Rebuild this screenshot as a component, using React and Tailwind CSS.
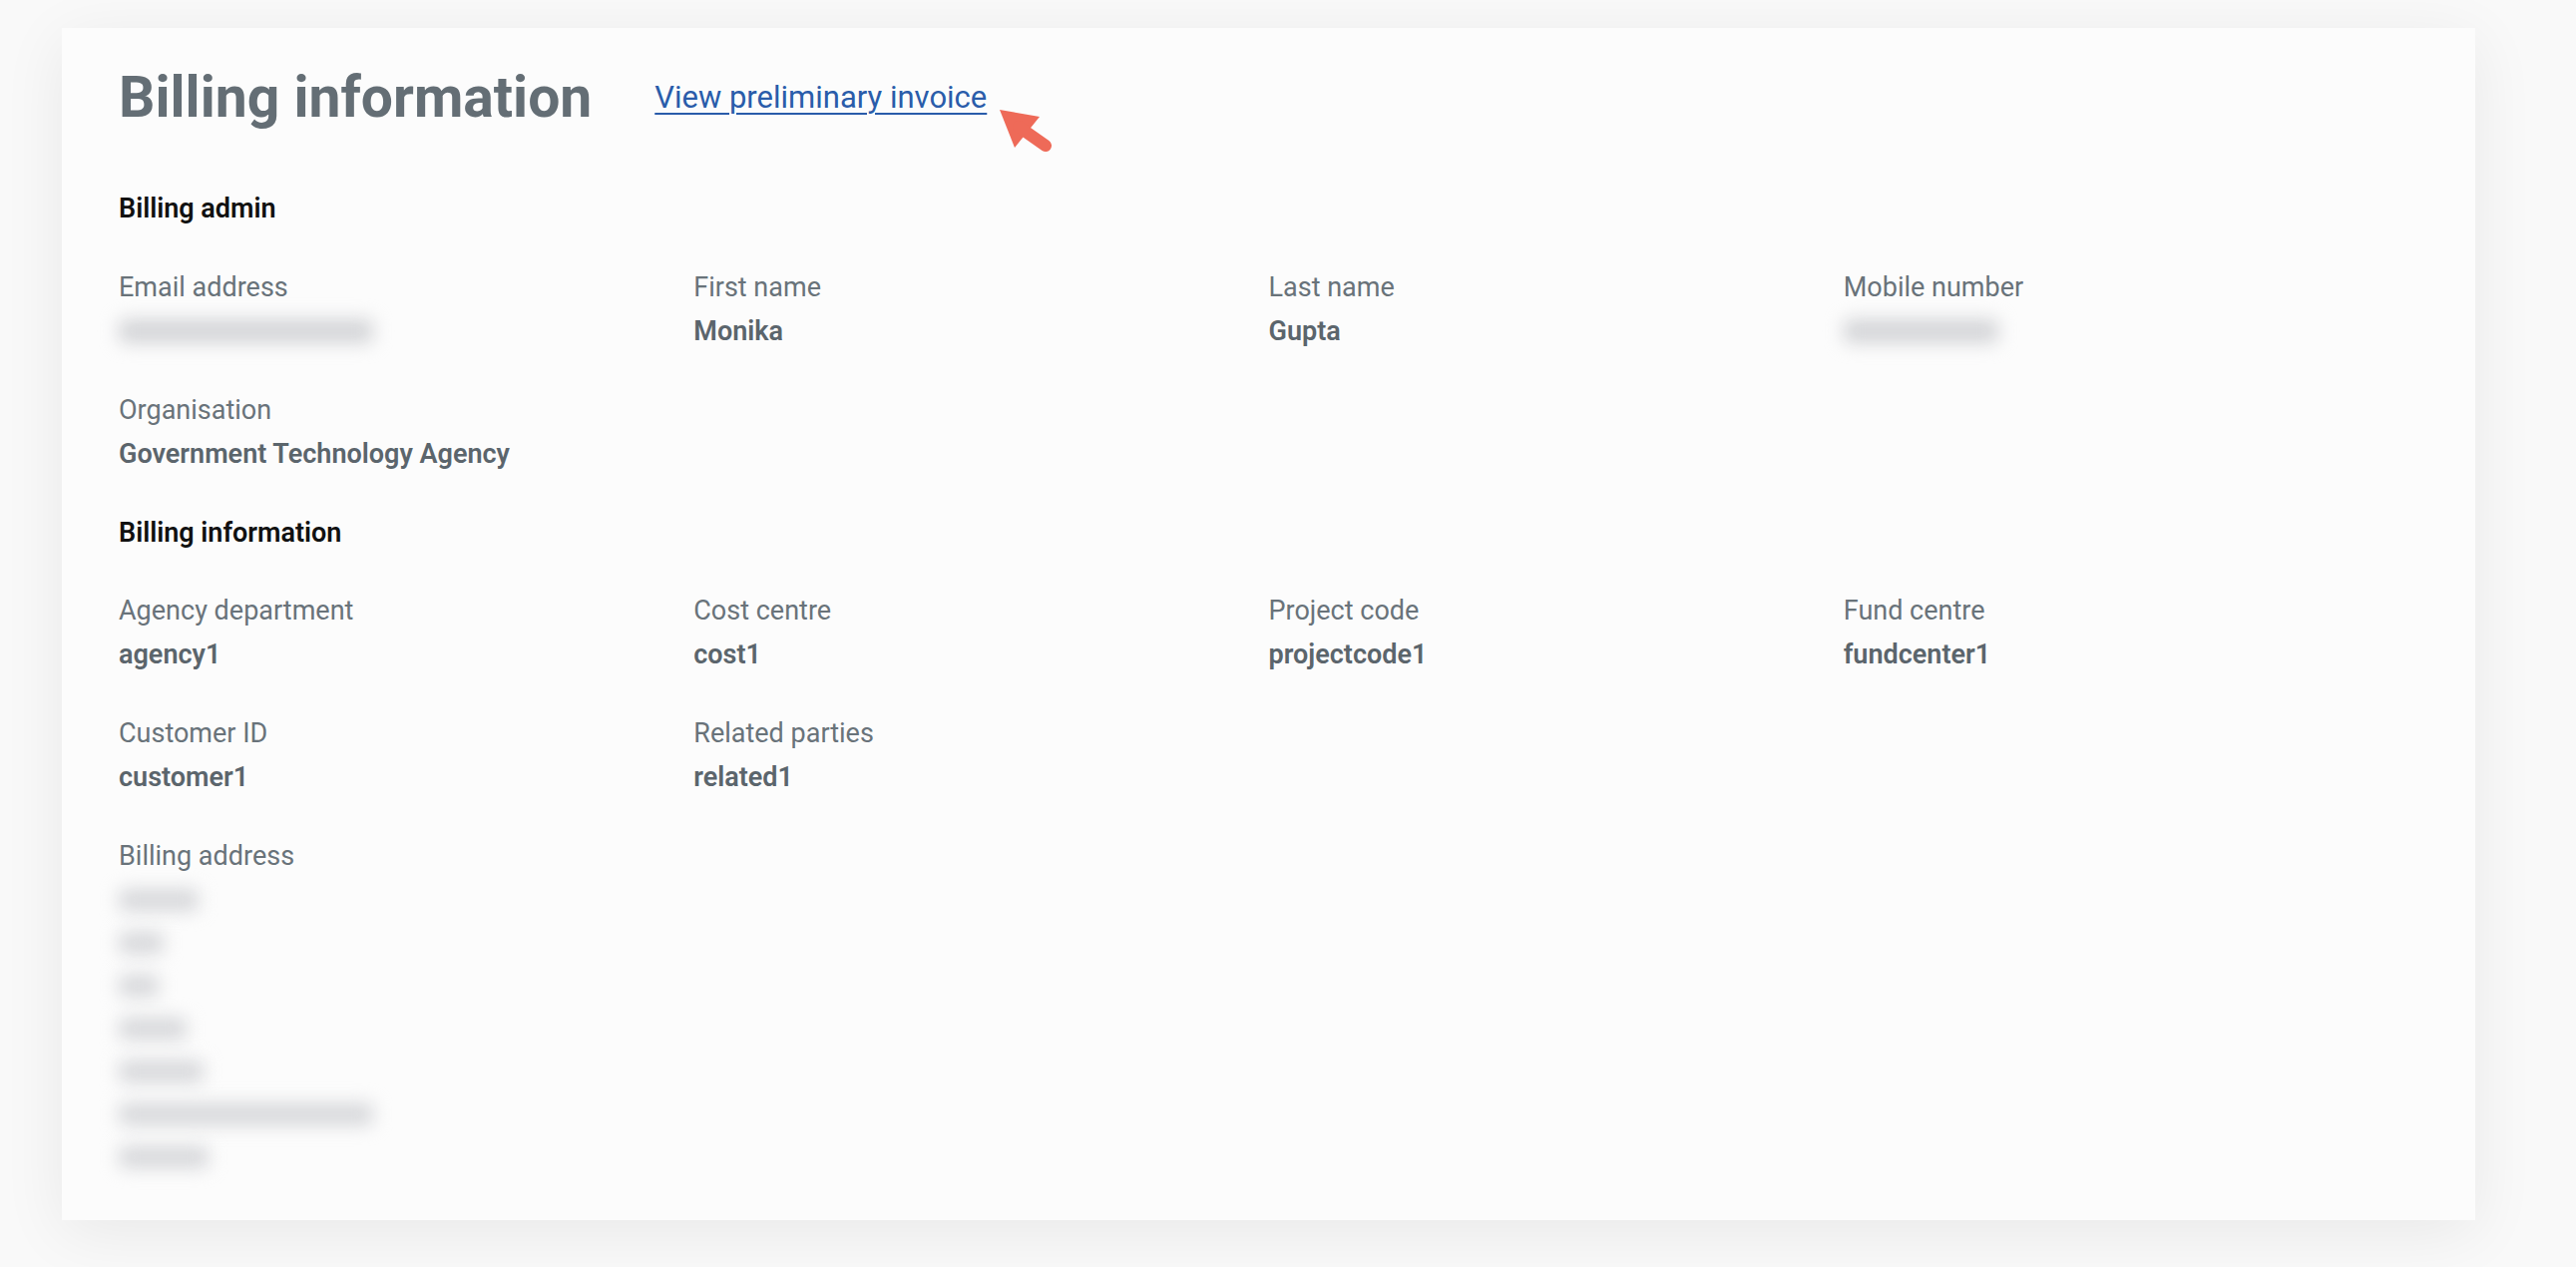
import React from 'react';

const font = { fontFamily: 'Roboto, "Noto Sans", Arial, sans-serif' };

// blurred placeholder for redacted values
const Redacted = ({ width, className = '' }) => (
  <div className={'h-[36px] flex items-center ' + className}>
    <div className="h-[24px] rounded-[6px] bg-[#d3d4d7] blur-[9px]" style={{ width }} />
  </div>
);

const Field = ({ label, value, redacted }) => (
  <div className="flex flex-col">
    <div className="text-[27px] leading-[36px] text-[#69737a]">{label}</div>
    <div className="mt-[8px]">
      {redacted ? (
        <Redacted width={redacted} />
      ) : (
        <div className="text-[27px] leading-[36px] font-semibold text-[#5b656c]">{value}</div>
      )}
    </div>
  </div>
);

const SectionTitle = ({ children, className = '' }) => (
  <div className={'text-[27px] leading-[36px] font-semibold text-[#111111] ' + className}>{children}</div>
);

const Arrow = () => (
  <svg width="60" height="52" viewBox="0 0 60 52" className="absolute left-[calc(100%+8px)] top-[25px]">
    <polygon points="5,5 45,12 20,43" fill="#ee6a58" />
    <line x1="24" y1="22" x2="51" y2="41" stroke="#ee6a58" strokeWidth="12" strokeLinecap="round" />
  </svg>
);

const addressLines = [80, 45, 40, 68, 85, 255, 90];

export default function App() {
  return (
    <div className="min-h-screen bg-[#f9f9f9] pt-[28px] pl-[62px]" style={font}>
      <div className="w-[2419px] h-[1195px] bg-[#fcfcfc] shadow-[0_12px_60px_rgba(0,0,0,0.07)] pt-[36px] pl-[57px] pr-[57px]">
        <div className="flex items-center gap-[63px] h-[68px]">
          <h1 className="text-[57px] leading-[68px] font-bold text-[#646e75]">Billing information</h1>
          <span className="relative">
            <a href="#" className="text-[31px] leading-[36px] text-[#2a5caa] underline underline-offset-[5px] decoration-2">
              View preliminary invoice
            </a>
            <Arrow />
          </span>
        </div>

        <SectionTitle className="mt-[59px]">Billing admin</SectionTitle>
        <div className="grid grid-cols-4 gap-y-[43px] mt-[43px]">
          <Field label="Email address" redacted={255} />
          <Field label="First name" value="Monika" />
          <Field label="Last name" value="Gupta" />
          <Field label="Mobile number" redacted={155} />
          <Field label="Organisation" value="Government Technology Agency" />
        </div>

        <SectionTitle className="mt-[43px]">Billing information</SectionTitle>
        <div className="grid grid-cols-4 gap-y-[43px] mt-[42px]">
          <Field label="Agency department" value="agency1" />
          <Field label="Cost centre" value="cost1" />
          <Field label="Project code" value="projectcode1" />
          <Field label="Fund centre" value="fundcenter1" />
          <Field label="Customer ID" value="customer1" />
          <Field label="Related parties" value="related1" />
        </div>

        <div className="mt-[43px]">
          <div className="text-[27px] leading-[36px] text-[#69737a]">Billing address</div>
          <div className="flex flex-col mt-[4px]">
            {addressLines.map((w, i) => (
              <div key={i} className="h-[43px] flex items-center">
                <div className="h-[22px] rounded-[6px] bg-[#d6d7da] blur-[9px]" style={{ width: w }} />
              </div>
            ))}
          </div>
        </div>
      </div>
    </div>
  );
}
